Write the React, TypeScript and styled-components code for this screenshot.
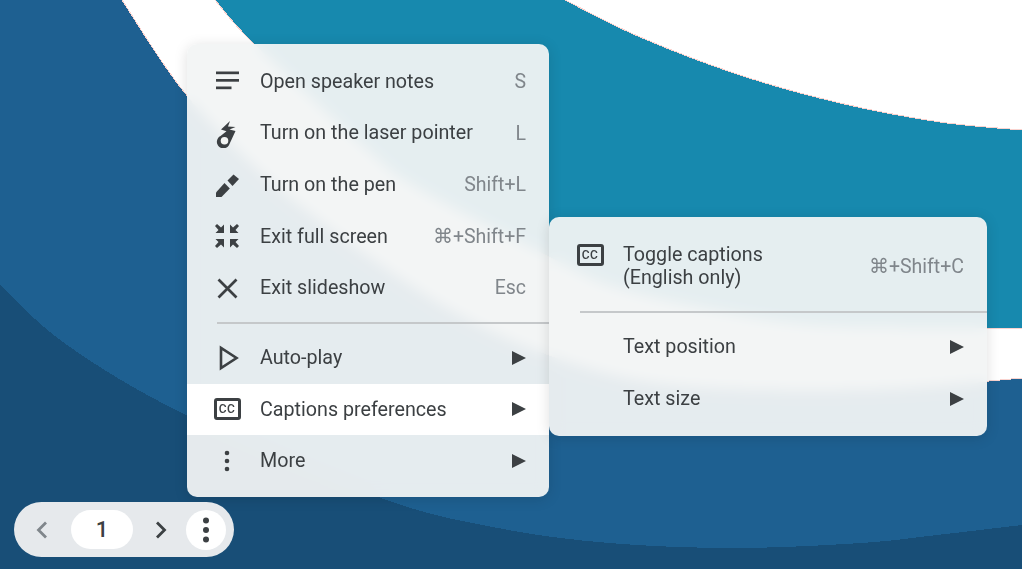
import styled, { createGlobalStyle } from "styled-components";
import { ReactNode } from "react";

const GlobalStyle = createGlobalStyle`
    html, body {
        margin: 0;
        padding: 0;
        overflow: hidden;
        background: #1e6091;
    }
    * {
        box-sizing: border-box;
    }
`

const Stage = styled.div`
    position: relative;
    width: 1022px;
    height: 569px;
    overflow: hidden;
    font-family: Roboto, "Liberation Sans", sans-serif;
    color: #3c4043;
`

const Slide = styled.svg`
    position: absolute;
    inset: 0;
    display: block;
    shape-rendering: crispEdges;
`

const Panel = styled.div`
    background-color: rgba(242, 244, 244, 0.94);
    backdrop-filter: blur(7px);
    border-radius: 10px;
    box-shadow: 0 2px 14px rgba(0, 0, 0, 0.13);
    padding: 12px 0 0;
`

const MainMenu = styled(Panel)`
    position: absolute;
    left: 187px;
    top: 44px;
    width: 362px;
    height: 453px;
    padding-top: 11.7px;
`

const SubMenu = styled(Panel)`
    position: absolute;
    left: 549px;
    top: 217px;
    width: 438px;
    height: 219px;
    padding-left: 1px;
`

const Row = styled.div<{ $active?: boolean; $tall?: boolean }>`
    display: flex;
    align-items: center;
    height: ${props => props.$tall ? "74px" : "51.6px"};
    padding: 0 23px 0 25px;
    font-size: 19.7px;
    background-color: ${props => props.$active ? "#fff" : "transparent"};
`

const IconSlot = styled.span<{ $lift?: boolean }>`
    flex: none;
    display: flex;
    align-items: center;
    justify-content: center;
    width: 30px;
    height: 30px;
    margin-right: 18px;
    margin-bottom: ${props => props.$lift ? "23px" : "0"};
`

const Label = styled.span`
    flex: 1;
    line-height: 23.5px;
`

const Shortcut = styled.span`
    font-size: 19.5px;
    color: #80868b;
`

const Arrow = styled.span`
    width: 0;
    height: 0;
    border-left: 14px solid #3c4043;
    border-top: 7px solid transparent;
    border-bottom: 7px solid transparent;
`

const Divider = styled.div<{ $inset: number }>`
    height: 2px;
    margin: 8px 0 8.3px ${props => props.$inset}px;
    background-color: #c5c8ca;
`

const CcBadge = styled.span`
    display: flex;
    align-items: center;
    justify-content: center;
    width: 27px;
    height: 22px;
    border: 3px solid #3c4043;
    border-radius: 3px;
    font-size: 12px;
    font-weight: 500;
    letter-spacing: 0.5px;
    line-height: 1;
`

const Pager = styled.div`
    position: absolute;
    left: 14px;
    top: 502px;
    width: 220px;
    height: 55px;
    display: flex;
    align-items: center;
    padding: 0 8px 0 18px;
    border-radius: 28px;
    background-color: #e6e9ec;
`

const PagerArrow = styled.span<{ $disabled?: boolean }>`
    display: flex;
    color: ${props => props.$disabled ? "#80868b" : "#3c4043"};
`

const PageNumber = styled.span`
    width: 62px;
    height: 39px;
    margin: 0 18px 0 19px;
    display: flex;
    align-items: center;
    justify-content: center;
    border-radius: 20px;
    background-color: #fff;
    font-size: 22px;
    font-weight: 500;
`

const MoreButton = styled.span`
    width: 40px;
    height: 40px;
    margin-left: auto;
    display: flex;
    align-items: center;
    justify-content: center;
    border-radius: 50%;
    background-color: #fff;
`

// catmull-rom through the sampled points of the slide's curves
function smooth(points: number[][], start = true) {
    let d = start ? `M${points[0][0]} ${points[0][1]}` : `L${points[0][0]} ${points[0][1]}`;
    for (let i = 0; i < points.length - 1; i++) {
        const p0 = points[Math.max(i - 1, 0)];
        const p1 = points[i];
        const p2 = points[i + 1];
        const p3 = points[Math.min(i + 2, points.length - 1)];
        d += `C${p1[0] + (p2[0] - p0[0]) / 6} ${p1[1] + (p2[1] - p0[1]) / 6} ${p2[0] - (p3[0] - p1[0]) / 6} ${p2[1] - (p3[1] - p1[1]) / 6} ${p2[0]} ${p2[1]}`;
    }
    return d;
}

const bandUpper = [[215, 0], [253, 43], [367, 150], [420, 190], [549, 257], [623, 290], [780, 322], [900, 328], [1022, 328]];
const bandLower = [[122, 0], [185, 93], [270, 180], [367, 255], [460, 315], [549, 355], [650, 382], [780, 390], [900, 388], [1022, 378]];
const cornerEdge = [[565, 0], [640, 37], [740, 75], [840, 103], [940, 122], [1022, 130]];
const darkEdge = [[0, 285], [67, 345], [186, 415], [381, 498], [498, 528], [609, 543], [735, 548], [861, 543], [937, 535], [1022, 525]];

function SlideArt() {
    const bandPath = smooth(bandUpper) + smooth([...bandLower].reverse(), false) + "Z";
    return (
        <Slide width="1022" height="569" viewBox="0 0 1022 569">
            <rect width="1022" height="569" fill="#1e6091" />
            <path d={smooth(bandUpper) + "L1022 0Z"} fill="#1789ae" />
            <path d={smooth(cornerEdge) + "L1022 0Z"} fill="#fff" />
            <path d={smooth(cornerEdge)} fill="none" stroke="#f9d3cf" strokeWidth="1" />
            <path d={bandPath} fill="#fff" />
            <path d={smooth(bandLower)} fill="none" stroke="#f9d3cf" strokeWidth="1" />
            <path d={smooth(bandUpper)} fill="none" stroke="#f9d3cf" strokeWidth="1" />
            <path d={smooth(darkEdge) + "L1022 569L0 569Z"} fill="#184e77" />
        </Slide>
    );
}

const NotesIcon = () => (
    <svg width="30" height="30" viewBox="0 0 30 30" fill="#3c4043">
        <rect x="4" y="5.5" width="23" height="2.7" />
        <rect x="4" y="13" width="23" height="2.7" />
        <rect x="4" y="20.5" width="15.5" height="2.7" />
    </svg>
);

const LaserIcon = () => (
    <svg width="30" height="30" viewBox="0 0 30 30">
        <path d="M18 3L9 11.5L14.5 13.3L8.5 18A6.5 6.5 0 1 0 17.5 26L23.5 13L17.5 11.5L23.5 9L16 8.5Z" fill="#3c4043" />
        <circle cx="12.5" cy="22.7" r="3.8" fill="#f3f5f4" />
    </svg>
);

const PenIcon = () => (
    <svg width="30" height="30" viewBox="0 0 30 30" fill="#3c4043">
        <path d="M15.5 10.5L21.5 4.5L27 9L20.5 16Z" />
        <path d="M4 27V22.5L12.5 13L17.8 18.5L9.5 27Z" />
    </svg>
);

const ExitFullIcon = () => (
    <svg width="30" height="30" viewBox="0 0 30 30" fill="#3c4043">
        <path d="M12 12H3.5L6.5 9L3 5L5 3L9 6.5L12 3.5Z" />
        <path d="M18 12H26.5L23.5 9L27 5L25 3L21 6.5L18 3.5Z" />
        <path d="M12 18H3.5L6.5 21L3 25L5 27L9 23.5L12 26.5Z" />
        <path d="M18 18H26.5L23.5 21L27 25L25 27L21 23.5L18 26.5Z" />
    </svg>
);

const CloseIcon = () => (
    <svg width="30" height="30" viewBox="0 0 30 30" fill="none" stroke="#3c4043" strokeWidth="2.7">
        <path d="M6.5 6.5L24.5 24.5M24.5 6.5L6.5 24.5" />
    </svg>
);

const PlayIcon = () => (
    <svg width="30" height="30" viewBox="0 0 30 30" fill="none" stroke="#3c4043" strokeWidth="2.6">
        <path d="M9 5V25L24.5 15Z" />
    </svg>
);

const DotsIcon = ({ size = 30, r = 2.3, gap = 8 }: { size?: number; r?: number; gap?: number }) => (
    <svg width={size} height={size} viewBox={`0 0 ${size} ${size}`} fill="#3c4043">
        <circle cx={size / 2} cy={size / 2 - gap} r={r} />
        <circle cx={size / 2} cy={size / 2} r={r} />
        <circle cx={size / 2} cy={size / 2 + gap} r={r} />
    </svg>
);

const Chevron = ({ left }: { left?: boolean }) => (
    <svg width="20" height="20" viewBox="0 0 20 20" fill="none" stroke="currentColor" strokeWidth="2.8">
        <path d={left ? "M14 2.5L6.5 10L14 17.5" : "M6 2.5L13.5 10L6 17.5"} />
    </svg>
);

interface IItem {
    icon: ReactNode;
    label: string;
    shortcut?: string;
    arrow?: boolean;
    active?: boolean;
}

const topItems: IItem[] = [
    { icon: <NotesIcon />, label: "Open speaker notes", shortcut: "S" },
    { icon: <LaserIcon />, label: "Turn on the laser pointer", shortcut: "L" },
    { icon: <PenIcon />, label: "Turn on the pen", shortcut: "Shift+L" },
    { icon: <ExitFullIcon />, label: "Exit full screen", shortcut: "⌘+Shift+F" },
    { icon: <CloseIcon />, label: "Exit slideshow", shortcut: "Esc" },
];

const bottomItems: IItem[] = [
    { icon: <PlayIcon />, label: "Auto-play", arrow: true },
    { icon: <CcBadge>CC</CcBadge>, label: "Captions preferences", arrow: true, active: true },
    { icon: <DotsIcon />, label: "More", arrow: true },
];

const MenuRow = ({ item }: { item: IItem }) => (
    <Row $active={item.active}>
        <IconSlot>{item.icon}</IconSlot>
        <Label>{item.label}</Label>
        {item.shortcut && <Shortcut>{item.shortcut}</Shortcut>}
        {item.arrow && <Arrow />}
    </Row>
);

export default function App() {
    return (
        <Stage>
            <GlobalStyle />
            <SlideArt />
            <MainMenu>
                {topItems.map(item => <MenuRow key={item.label} item={item} />)}
                <Divider $inset={30} />
                {bottomItems.map(item => <MenuRow key={item.label} item={item} />)}
            </MainMenu>
            <SubMenu>
                <Row $tall>
                    <IconSlot $lift><CcBadge>CC</CcBadge></IconSlot>
                    <Label>Toggle captions<br />(English only)</Label>
                    <Shortcut>⌘+Shift+C</Shortcut>
                </Row>
                <Divider $inset={30} />
                <MenuRow item={{ icon: null, label: "Text position", arrow: true }} />
                <MenuRow item={{ icon: null, label: "Text size", arrow: true }} />
            </SubMenu>
            <Pager>
                <PagerArrow $disabled><Chevron left /></PagerArrow>
                <PageNumber>1</PageNumber>
                <PagerArrow><Chevron /></PagerArrow>
                <MoreButton><DotsIcon size={30} r={3} gap={9.5} /></MoreButton>
            </Pager>
        </Stage>
    );
}
